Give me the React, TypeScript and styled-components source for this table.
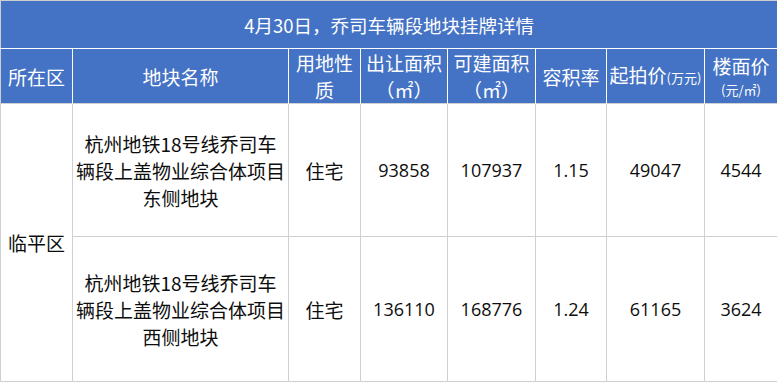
import React from 'react'
import styled, { createGlobalStyle } from 'styled-components'

const GlobalStyle = createGlobalStyle`
  html, body {
    margin: 0;
    padding: 0;
    background: #ffffff;
  }
`

const Table = styled.table`
  border-collapse: collapse;
  table-layout: fixed;
  width: 777px;
  font-family: 'Noto Sans CJK SC', 'Noto Sans', sans-serif;
  color: #0d0d0d;
  border: 1px solid #cfcfcf;
`

const TitleCell = styled.th`
  height: 47px;
  padding: 0;
  background: #4472c4;
  color: #ffffff;
  font-size: 18.5px;
  font-weight: 400;
  text-align: center;
  border: 1px solid #cfcfcf;
  border-bottom: 1px solid #ffffff;
`

const HeadCell = styled.th`
  height: 53px;
  padding: 0 2px;
  background: #4472c4;
  color: #ffffff;
  font-size: 19px;
  font-weight: 400;
  line-height: 27px;
  text-align: center;
  border: 1px solid #ffffff;
  border-bottom: none;
  &:first-child {
    border-left: 1px solid #cfcfcf;
  }
  &:last-child {
    border-right: 1px solid #cfcfcf;
  }
`

const Unit = styled.span<{ $block?: boolean }>`
  font-size: 13px;
  display: ${(p) => (p.$block ? 'block' : 'inline')};
  line-height: ${(p) => (p.$block ? '22px' : 'inherit')};
`

const Cell = styled.td<{ $h?: number }>`
  height: ${(p) => (p.$h ? `${p.$h}px` : 'auto')};
  padding: 0;
  font-size: 19px;
  line-height: 27px;
  text-align: center;
  vertical-align: middle;
  white-space: nowrap;
  border: 1px solid #d0d0d0;
`

const Line = styled.span`
  display: block;
`

const Num = styled(Cell)`
  font-family: 'Open Sans', 'Noto Sans CJK SC', sans-serif;
  font-size: 18px;
`

const widths = [72, 216, 72, 87, 88, 71, 98, 73]

const rows = [
  { side: '东侧地块', use: '住宅', sell: '93858', build: '107937', ratio: '1.15', price: '49047', unit: '4544', h: 132 },
  { side: '西侧地块', use: '住宅', sell: '136110', build: '168776', ratio: '1.24', price: '61165', unit: '3624', h: 144 },
]

export default function App() {
  return (
    <>
      <GlobalStyle />
      <Table>
        <colgroup>
          {widths.map((w, i) => (
            <col key={i} style={{ width: w }} />
          ))}
        </colgroup>
        <thead>
          <tr>
            <TitleCell colSpan={8}>4月30日，乔司车辆段地块挂牌详情</TitleCell>
          </tr>
          <tr>
            <HeadCell>所在区</HeadCell>
            <HeadCell>地块名称</HeadCell>
            <HeadCell>用地性质</HeadCell>
            <HeadCell>出让面积（㎡）</HeadCell>
            <HeadCell>可建面积（㎡）</HeadCell>
            <HeadCell>容积率</HeadCell>
            <HeadCell>
              起拍价<Unit>(万元)</Unit>
            </HeadCell>
            <HeadCell>
              楼面价<Unit $block>(元/㎡)</Unit>
            </HeadCell>
          </tr>
        </thead>
        <tbody>
          {rows.map((r, i) => (
            <tr key={i}>
              {i === 0 && <Cell rowSpan={2}>临平区</Cell>}
              <Cell $h={r.h}>
                <Line>杭州地铁18号线乔司车</Line>
                <Line>辆段上盖物业综合体项目</Line>
                <Line>{r.side}</Line>
              </Cell>
              <Cell>{r.use}</Cell>
              <Num>{r.sell}</Num>
              <Num>{r.build}</Num>
              <Num>{r.ratio}</Num>
              <Num>{r.price}</Num>
              <Num>{r.unit}</Num>
            </tr>
          ))}
        </tbody>
      </Table>
    </>
  )
}
